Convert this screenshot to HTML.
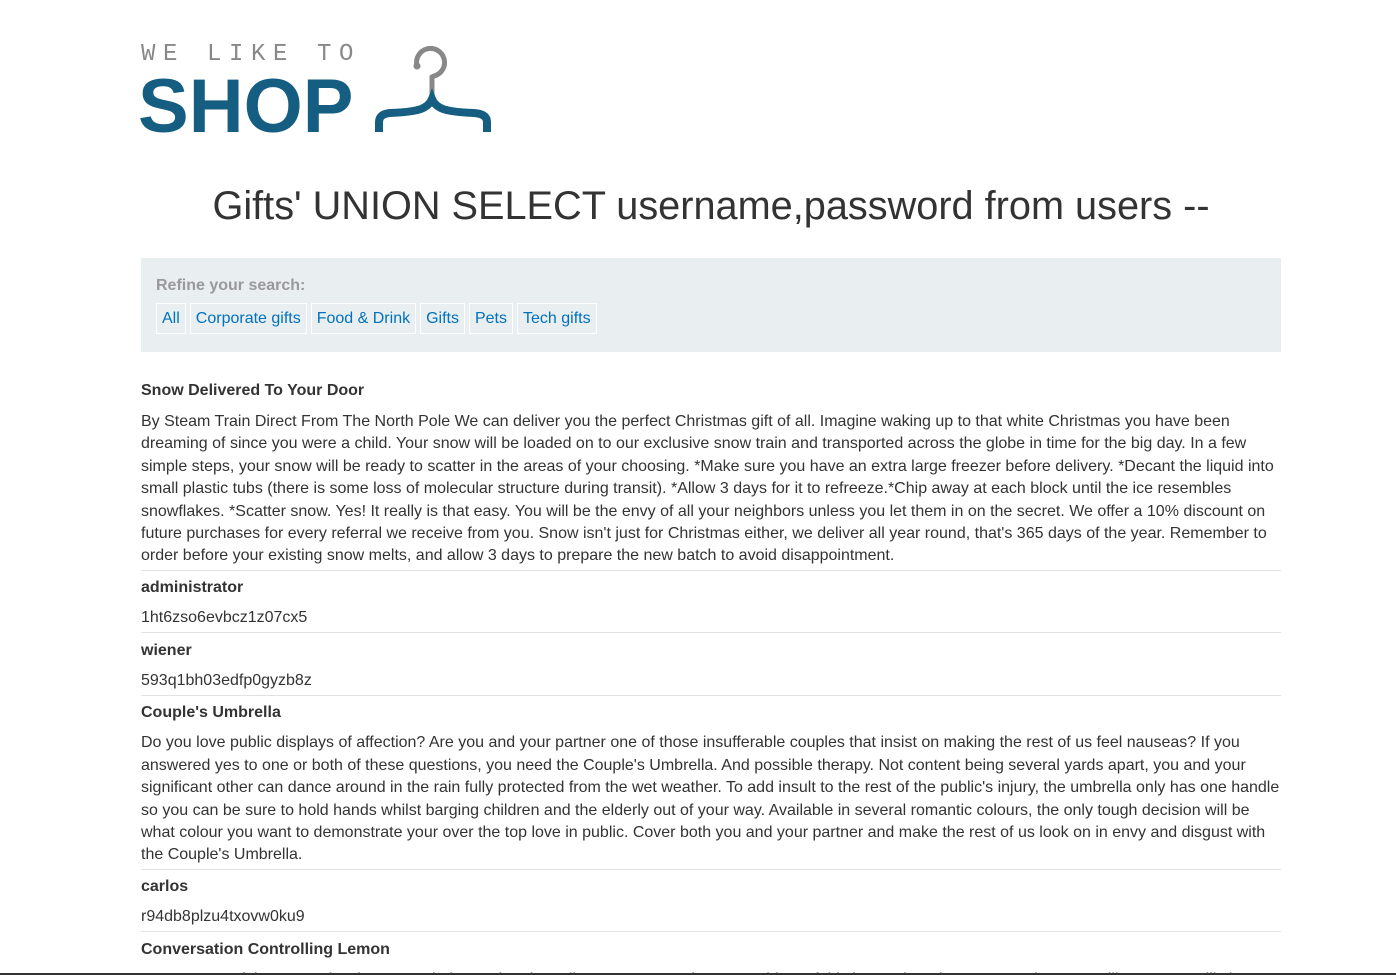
<!DOCTYPE html>
<html style="height:975px;overflow:hidden"><head><meta charset="utf-8"><style>
*{box-sizing:border-box}
body{margin:0;background:#fff;font-family:"Liberation Sans",Arial,sans-serif;color:#333;width:1396px;height:975px;overflow:hidden;position:relative}
.c{position:absolute;left:141px;width:1140px}
.logo1{position:absolute;left:141px;top:41px;font-family:"Liberation Mono",monospace;font-size:24px;letter-spacing:7.6px;color:#888}
.logo2{position:absolute;left:138px;top:63px;font-size:76px;font-weight:bold;color:#155e81;letter-spacing:0px}
h1{position:absolute;left:141px;width:1140px;top:184px;margin:0;text-align:center;font-weight:normal;font-size:39.7px;color:#333}
.f{top:258px;height:94px;background:#e9eef1;padding:19px 15px}
.f b{display:block;color:#999;font-size:16px;margin-bottom:8px}
.f a{display:inline-block;border:1px solid #fff;padding:4px 5px;color:#0071bc;text-decoration:none;font-size:16px;margin-right:4px;line-height:21px}
table{border-collapse:collapse;width:1140px;font-size:16px;line-height:22px}
th{text-align:left;padding:6px 0 2px;border-top:1px solid #e2e2e2;color:#333;height:31px}
td{padding:6px 0 3px;color:#333;height:31px}
td.d{line-height:22.4px;padding:6px 0 2px}
tr:first-child th{border-top:none;height:30px;padding:5px 0 3px}
.bar{position:absolute;left:0;top:973px;width:1396px;height:2px;background:#333}
</style></head><body>
<div class="logo1">WE LIKE TO</div>
<div class="logo2">SHOP</div>
<svg style="position:absolute;left:370px;top:42px" width="125" height="95" viewBox="0 0 125 95">
<path d="M47 24 A14 14 0 1 1 64 34 L62 35 L62 55" fill="none" stroke="#888" stroke-width="5"/>
<circle cx="47" cy="24" r="3.5" fill="#888"/>
<path d="M9 90 L9 80 Q9 72 20 71 Q48 70 55 65 Q60 62 62 57 Q64 62 69 65 Q76 70 104 71 Q117 72 117 80 L117 90" fill="none" stroke="#155e81" stroke-width="8"/>
</svg>
<h1>Gifts' UNION SELECT username,password from users --</h1>
<div class="c f"><b>Refine your search:</b><a>All</a><a>Corporate gifts</a><a>Food &amp; Drink</a><a>Gifts</a><a>Pets</a><a>Tech gifts</a></div>
<div class="c" style="top:375px"><table>
<tr><th>Snow Delivered To Your Door</th></tr>
<tr><td class="d">By Steam Train Direct From The North Pole We can deliver you the perfect Christmas gift of all. Imagine waking up to that white Christmas you have been dreaming of since you were a child. Your snow will be loaded on to our exclusive snow train and transported across the globe in time for the big day. In a few simple steps, your snow will be ready to scatter in the areas of your choosing. *Make sure you have an extra large freezer before delivery. *Decant the liquid into small plastic tubs (there is some loss of molecular structure during transit). *Allow 3 days for it to refreeze.*Chip away at each block until the ice resembles snowflakes. *Scatter snow. Yes! It really is that easy. You will be the envy of all your neighbors unless you let them in on the secret. We offer a 10% discount on future purchases for every referral we receive from you. Snow isn't just for Christmas either, we deliver all year round, that's 365 days of the year. Remember to order before your existing snow melts, and allow 3 days to prepare the new batch to avoid disappointment.</td></tr>
<tr><th>administrator</th></tr>
<tr><td>1ht6zso6evbcz1z07cx5</td></tr>
<tr><th>wiener</th></tr>
<tr><td>593q1bh03edfp0gyzb8z</td></tr>
<tr><th>Couple's Umbrella</th></tr>
<tr><td class="d">Do you love public displays of affection? Are you and your partner one of those insufferable couples that insist on making the rest of us feel nauseas? If you answered yes to one or both of these questions, you need the Couple's Umbrella. And possible therapy. Not content being several yards apart, you and your significant other can dance around in the rain fully protected from the wet weather. To add insult to the rest of the public's injury, the umbrella only has one handle so you can be sure to hold hands whilst barging children and the elderly out of your way. Available in several romantic colours, the only tough decision will be what colour you want to demonstrate your over the top love in public. Cover both you and your partner and make the rest of us look on in envy and disgust with the Couple's Umbrella.</td></tr>
<tr><th>carlos</th></tr>
<tr><td>r94db8plzu4txovw0ku9</td></tr>
<tr><th>Conversation Controlling Lemon</th></tr>
<tr><td class="d">Are you one of those people who opens their mouth only to discover you say the wrong thing? If this is you then the Conversation Controlling Lemon will change the way you socialize forever.</td></tr>
</table></div>
<div class="bar"></div>
</body></html>
